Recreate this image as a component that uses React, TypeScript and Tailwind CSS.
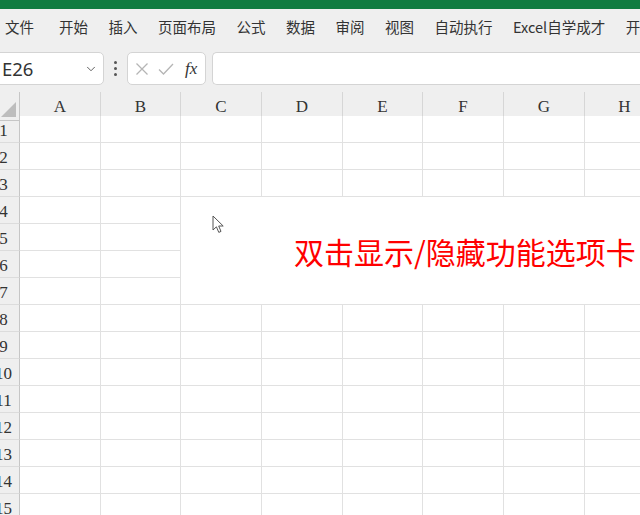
import React from 'react';
import { ChevronDown } from 'lucide-react';

const tabs = ['文件', '开始', '插入', '页面布局', '公式', '数据', '审阅', '视图', '自动执行', 'Excel自学成才', '开发工具'];
const cols = ['A', 'B', 'C', 'D', 'E', 'F', 'G', 'H'];
const rows = Array.from({ length: 15 }, (_, i) => i + 1);

const uiFont = { fontFamily: '"Noto Sans", "Noto Sans CJK SC", sans-serif' };
const cjkFont = { fontFamily: '"Noto Sans CJK SC", "Noto Sans", sans-serif' };
const serifFont = { fontFamily: '"Liberation Serif", "Noto Sans CJK SC", serif' };

function Cursor() {
  return (
    <svg className="absolute left-[212px] top-[215px]" width="13" height="19" viewBox="0 0 13 19">
      <path d="M1 1 L1 15 L4.4 11.8 L6.8 17.4 L9 16.4 L6.7 11 L11.2 11 Z" fill="#fff" stroke="#555" strokeWidth="1" strokeLinejoin="round" />
    </svg>
  );
}

function Sheet() {
  const body: React.ReactNode[] = [];
  rows.forEach((r) => {
    body.push(
      <div key={`h${r}`} className="flex items-center justify-center border-b border-r border-b-[#dcdcdc] border-r-[#c6c6c6] bg-[#efefef] pt-[3px] text-[17px] text-[#333]" style={serifFont}>
        {r}
      </div>,
    );
    cols.forEach((c, ci) => {
      if (r >= 4 && r <= 7 && ci >= 2) {
        if (r === 4 && ci === 2) {
          body.push(
            <div key="merged" className="col-span-6 row-span-4 flex items-center border-b border-r border-[#e1e1e1] bg-white pl-[113px]">
              <span className="whitespace-nowrap text-[30px] leading-none text-[#ff0000]" style={cjkFont}>
                双击显示/隐藏功能选项卡
              </span>
            </div>,
          );
        }
        return;
      }
      body.push(<div key={`${c}${r}`} className="border-b border-r border-[#e1e1e1] bg-white" />);
    });
  });

  return (
    <div className="-ml-[12px]">
      <div className="grid h-[24px] grid-cols-[32px_81px_80px_81px_81px_80px_81px_81px_80px] bg-[#efefef]">
        <div className="relative border-b border-r border-b-[#c6c6c6] border-r-[#c6c6c6]">
          <div className="absolute bottom-[3px] right-[3px] h-0 w-0 border-b-[15px] border-l-[15px] border-b-[#bdbdbd] border-l-transparent" />
        </div>
        {cols.map((c) => (
          <div key={c} className="flex items-center justify-center border-b border-r border-b-[#c6c6c6] border-r-[#d6d6d6] pt-[2px] text-[17px] text-[#333]" style={serifFont}>
            {c}
          </div>
        ))}
      </div>
      <div className="grid grid-cols-[32px_81px_80px_81px_81px_80px_81px_81px_80px] auto-rows-[27px]">{body}</div>
    </div>
  );
}

export default function App() {
  return (
    <div className="relative h-[515px] w-[640px] overflow-hidden bg-white">
      <div className="h-[9px] bg-[#107c41]" />
      <div className="flex h-[35px] items-center gap-[20.5px] whitespace-nowrap bg-[#efefef] pl-[5px] text-[14.5px] text-[#333]" style={cjkFont}>
        {tabs.map((t, i) => (
          <span key={t} className={i === 0 ? 'mr-[4.5px]' : ''}>
            {t}
          </span>
        ))}
      </div>
      <div className="flex h-[48px] items-start bg-[#efefef] pt-[8px]">
        <div className="-ml-[5px] flex h-[33px] w-[109px] items-center justify-between rounded-[5px] border border-[#d4d4d4] bg-white pl-[6px] pr-[5px]">
          <span className="text-[18.5px] text-[#333]" style={uiFont}>E26</span>
          <ChevronDown className="h-[14px] w-[14px] text-[#555]" strokeWidth={1.6} />
        </div>
        <div className="flex h-[33px] w-[23px] flex-col items-center justify-center gap-[3px]">
          <span className="h-[3px] w-[3px] rounded-full bg-[#555]" />
          <span className="h-[3px] w-[3px] rounded-full bg-[#555]" />
          <span className="h-[3px] w-[3px] rounded-full bg-[#555]" />
        </div>
        <div className="flex h-[33px] w-[79px] items-center rounded-[5px] border border-[#d4d4d4] bg-white pl-[7px]">
          <svg width="14" height="14" viewBox="0 0 14 14" className="mr-[9px]">
            <path d="M1.5 1.5 L12.5 12.5 M12.5 1.5 L1.5 12.5" stroke="#b5b5b5" strokeWidth="1.3" fill="none" />
          </svg>
          <svg width="16" height="14" viewBox="0 0 16 14" className="mr-[11px]">
            <path d="M1 7.5 L5.5 12 L15 2" stroke="#b5b5b5" strokeWidth="1.3" fill="none" />
          </svg>
          <span className="text-[17px] italic leading-none text-[#333]" style={serifFont}>fx</span>
        </div>
        <div className="ml-[6px] h-[33px] flex-1 rounded-l-[5px] border border-r-0 border-[#d4d4d4] bg-white" />
      </div>
      <Sheet />
      <Cursor />
    </div>
  );
}
